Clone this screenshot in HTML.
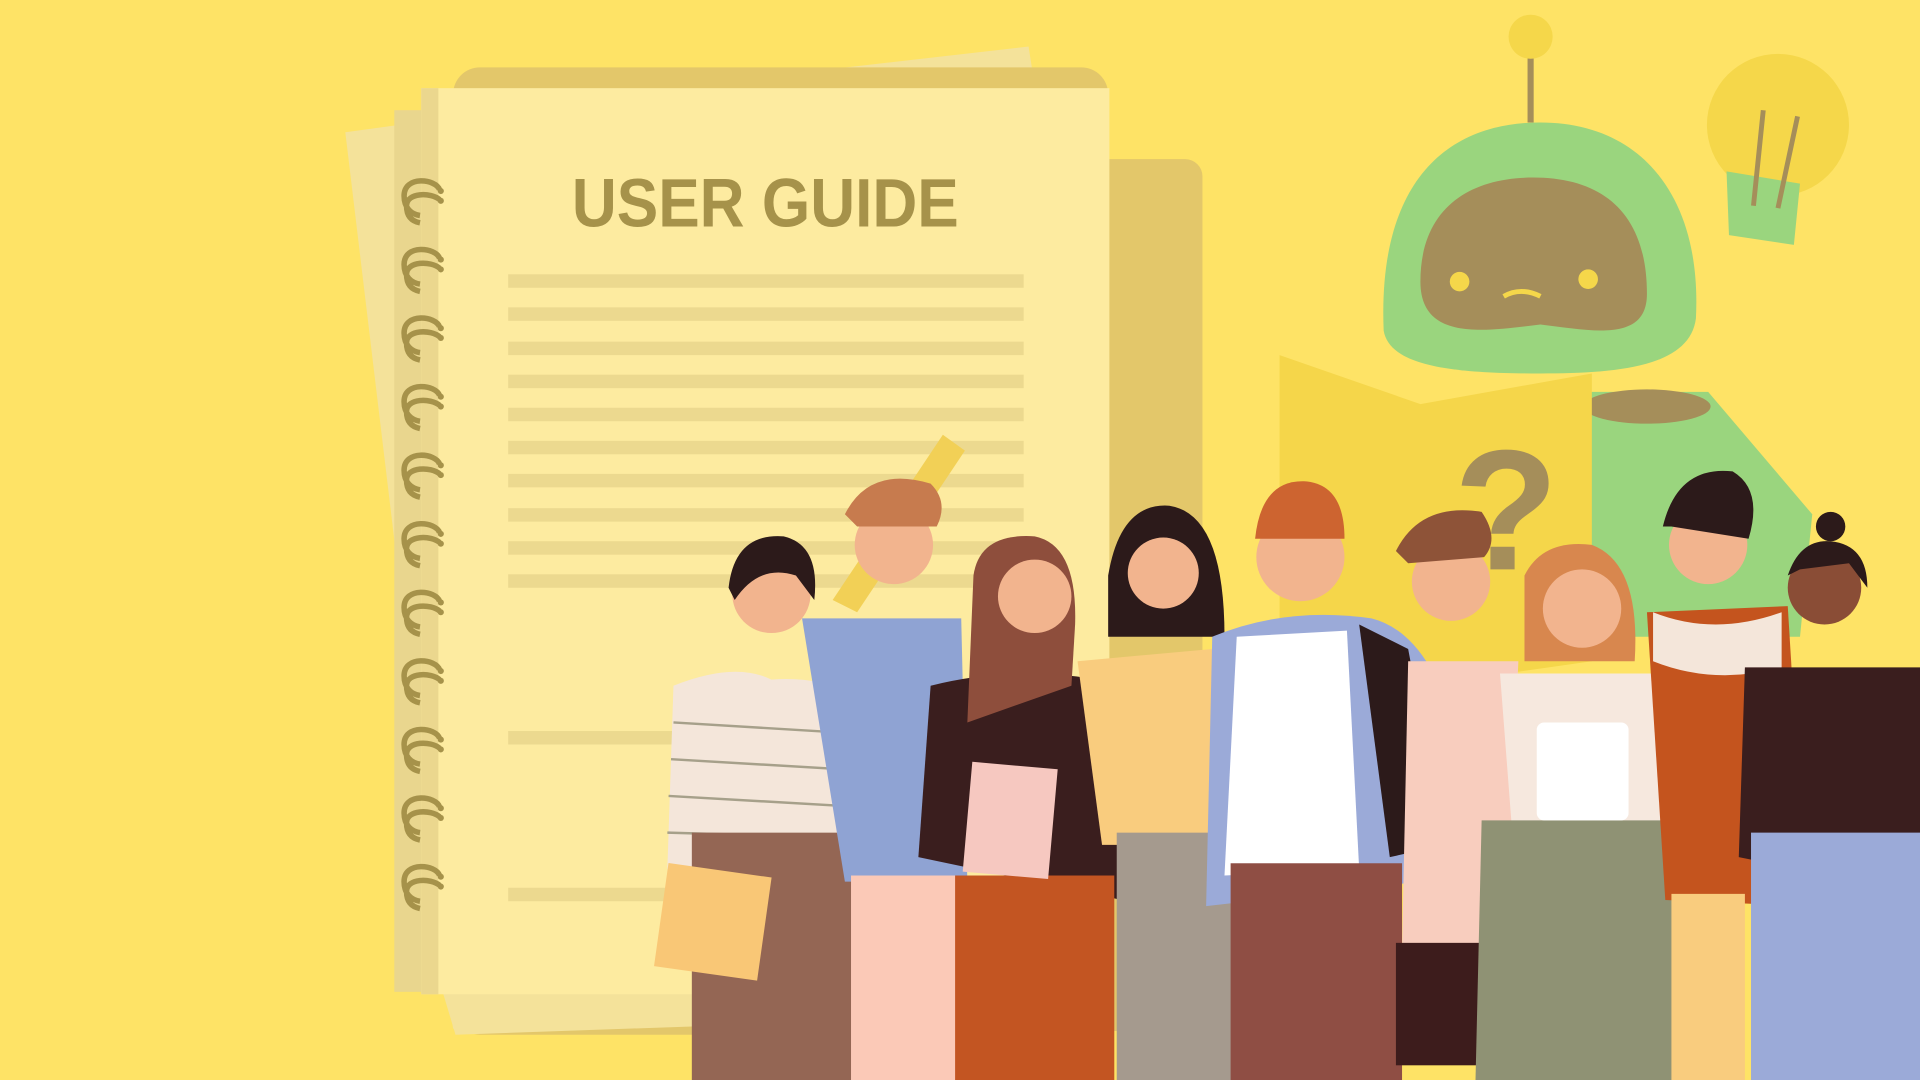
<!DOCTYPE html>
<html><head><meta charset="utf-8">
<style>
html,body{margin:0;padding:0;width:1920px;height:1080px;overflow:hidden;background:#FEE366;}
svg{display:block}
</style></head>
<body>
<svg width="1920" height="1080" viewBox="0 0 1568 882" xmlns="http://www.w3.org/2000/svg">
<rect width="1568" height="882" fill="#FEE366"/>
<!-- back sheets -->
<polygon points="282,108 560,70 840,38 845,70 420,830 370,840" fill="#F4E29A"/>
<rect x="370" y="55" width="535" height="790" rx="22" fill="#E3C76A"/>
<rect x="880" y="130" width="102" height="712" rx="14" fill="#E3C76A"/>
<rect x="322" y="90" width="30" height="720" fill="#E9D68E"/>
<polygon points="360,805 660,800 660,835 372,845" fill="#F4E29A"/>
<!-- main page -->
<rect x="344" y="72" width="562" height="740" fill="#FDEBA0"/>
<rect x="344" y="72" width="14" height="740" fill="#EBD78E"/>
<text x="467" y="185" textLength="316" lengthAdjust="spacingAndGlyphs" font-family="Liberation Sans Narrow,Liberation Sans,sans-serif" font-weight="bold" font-size="56" fill="#A6924A">USER GUIDE</text>
<g fill="#ECD98F">
<rect x="415" y="224" width="421" height="11"/><rect x="415" y="251" width="421" height="11"/>
<rect x="415" y="279" width="421" height="11"/><rect x="415" y="306" width="421" height="11"/>
<rect x="415" y="333" width="421" height="11"/><rect x="415" y="360" width="421" height="11"/>
<rect x="415" y="387" width="421" height="11"/><rect x="415" y="415" width="421" height="11"/>
<rect x="415" y="442" width="421" height="11"/><rect x="415" y="469" width="421" height="11"/>
<rect x="415" y="597" width="200" height="11"/><rect x="415" y="725" width="200" height="11"/>
</g>
<!-- rings -->
<defs>
<g id="r">
<path d="M359,155 C356,146 330,143 330,160 C330,170 336,175 343,176 M359,163 C352,157 332,157 332,168 C332,178 338,181 343,182" fill="none" stroke="#A6924A" stroke-width="4.5"/>
<circle cx="360" cy="156" r="2.5" fill="#A6924A"/><circle cx="360" cy="164" r="2.5" fill="#A6924A"/>
</g>
</defs>
<use href="#r"/><use href="#r" y="56"/><use href="#r" y="112"/><use href="#r" y="168"/><use href="#r" y="224"/>
<use href="#r" y="280"/><use href="#r" y="336"/><use href="#r" y="392"/><use href="#r" y="448"/>
<use href="#r" y="504"/><use href="#r" y="560"/>
<!-- pencil -->
<polygon points="770,355 788,368 700,500 680,490" fill="#F2D056"/>
<!-- robot -->
<line x1="1250" y1="35" x2="1250" y2="100" stroke="#A58E5A" stroke-width="5"/>
<circle cx="1250" cy="30" r="18" fill="#F5D74A"/>
<path d="M1130,270 C1125,150 1180,100 1258,100 C1340,100 1390,160 1385,260 C1380,300 1320,305 1258,305 C1190,305 1135,300 1130,270Z" fill="#9AD57E"/>
<path d="M1160,230 C1160,170 1200,145 1252,145 C1310,145 1345,175 1345,240 C1345,280 1300,270 1258,265 C1215,270 1160,280 1160,230Z" fill="#A58E5A"/>
<circle cx="1192" cy="230" r="8" fill="#F5D74A"/><circle cx="1297" cy="228" r="8" fill="#F5D74A"/>
<path d="M1228,242 Q1242,234 1258,242" stroke="#F5D74A" stroke-width="4" fill="none"/>
<path d="M1290,320 L1395,320 L1480,420 L1470,520 L1300,520Z" fill="#9AD57E"/>
<ellipse cx="1345" cy="332" rx="52" ry="14" fill="#A58E5A"/>
<!-- map -->
<polygon points="1045,290 1160,330 1300,305 1300,540 1160,560 1045,520" fill="#F5D64A"/>
<text x="1230" y="465" text-anchor="middle" font-family="Liberation Sans,sans-serif" font-weight="bold" font-size="140" fill="#A58E5A">?</text>
<!-- bulb -->
<circle cx="1452" cy="102" r="58" fill="#F5D74A"/>
<path d="M1410,140 L1470,150 L1465,200 L1412,192Z" fill="#9AD57E"/>
<path d="M1432,168 L1440,90 M1452,170 L1468,95" stroke="#A58E5A" stroke-width="4" fill="none"/>
<!-- people -->
<g>
<path d="M550,560 Q600,540 630,555 Q700,550 720,600 L720,690 L545,710Z" fill="#F4E6DA"/>
<g stroke="#A6A08A" stroke-width="2"><line x1="550" y1="590" x2="715" y2="600"/><line x1="548" y1="620" x2="718" y2="630"/><line x1="546" y1="650" x2="720" y2="660"/><line x1="545" y1="680" x2="720" y2="685"/></g>
<rect x="565" y="680" width="140" height="202" fill="#946654"/>
<circle cx="630" cy="485" r="32" fill="#F2B48E"/><path d="M595,480 Q600,435 640,438 Q670,445 665,490 L650,470 Q620,460 600,490Z" fill="#2C1A1A"/>
<rect x="540" y="710" width="85" height="85" fill="#F9C776" transform="rotate(8 580 750)"/>
<path d="M655,505 L785,505 L790,720 L690,720Z" fill="#8FA3D3"/>
<rect x="695" y="715" width="90" height="167" fill="#FBC9B7"/>
<circle cx="730" cy="445" r="32" fill="#F2B48E"/><path d="M690,420 Q710,380 760,395 Q775,410 765,430 L700,430Z" fill="#C77B4E"/>
<path d="M760,560 Q840,540 920,560 L940,740 L750,700Z" fill="#3A1E1E"/>
<rect x="780" y="715" width="130" height="167" fill="#C35522"/>
<path d="M795,470 Q800,435 845,438 Q880,445 878,510 L875,560 L790,590Z" fill="#8E4E3C"/>
<circle cx="845" cy="487" r="30" fill="#F2B48E"/>
<rect x="790" y="625" width="70" height="90" fill="#F6C8C0" transform="rotate(5 825 670)"/>
<path d="M880,540 L990,530 L1000,690 L900,690Z" fill="#F9CC7E"/>
<rect x="912" y="680" width="100" height="202" fill="#A59A8E"/>
<path d="M905,470 Q915,410 955,413 Q1000,420 1000,520 L905,520Z" fill="#2C1A1A"/>
<circle cx="950" cy="468" r="29" fill="#F2B48E"/>
<path d="M990,520 Q1050,495 1120,505 Q1180,520 1200,650 L1160,720 L985,740Z" fill="#9BAAD8"/>
<path d="M1010,520 L1100,515 L1110,710 L1000,715Z" fill="#FFFFFF"/>
<rect x="1005" y="705" width="140" height="177" fill="#8F4E44"/>
<circle cx="1062" cy="455" r="36" fill="#F2B48E"/>
<path d="M1025,440 Q1030,392 1065,393 Q1098,395 1098,440Z" fill="#CD6430"/>
<path d="M1110,510 L1150,530 L1180,690 L1135,700Z" fill="#2C1A1A"/>
<path d="M1150,540 L1240,540 L1230,775 L1145,775Z" fill="#F8CDBE"/>
<rect x="1140" y="770" width="80" height="100" fill="#3D1C1C"/>
<circle cx="1185" cy="475" r="32" fill="#F2B48E"/><path d="M1140,450 Q1160,410 1210,418 Q1225,440 1212,455 L1150,460Z" fill="#8E5338"/>
<path d="M1225,550 L1360,550 L1370,680 L1235,680Z" fill="#F6E8DE"/>
<path d="M1210,670 L1380,670 L1385,882 L1205,882Z" fill="#8F9274"/>
<path d="M1245,470 Q1260,440 1300,445 Q1340,460 1335,540 L1245,540Z" fill="#D8874E"/>
<circle cx="1292" cy="497" r="32" fill="#F2B48E"/>
<rect x="1255" y="590" width="75" height="80" rx="6" fill="#FFFFFF"/>
<path d="M1345,500 L1460,495 L1475,740 L1360,735Z" fill="#C4541E"/>
<path d="M1350,500 Q1400,520 1455,500 L1455,545 Q1400,560 1350,540Z" fill="#F4E6DA"/>
<rect x="1365" y="730" width="60" height="152" fill="#F9CC7E"/>
<circle cx="1395" cy="445" r="32" fill="#F2B48E"/><path d="M1358,430 Q1370,380 1415,385 Q1440,400 1428,440 L1365,430Z" fill="#2C1A1A"/>
<path d="M1425,545 L1568,545 L1568,730 L1420,700Z" fill="#3A1E1E"/>
<path d="M1430,680 L1568,680 L1568,882 L1430,882Z" fill="#9BAAD8"/>
<circle cx="1490" cy="480" r="30" fill="#8A4D36"/><circle cx="1495" cy="430" r="12" fill="#2C1A1A"/>
<path d="M1460,470 Q1470,440 1495,442 Q1525,445 1525,480 L1510,460 L1470,465Z" fill="#2C1A1A"/>
</g>
</svg>
</body></html>
